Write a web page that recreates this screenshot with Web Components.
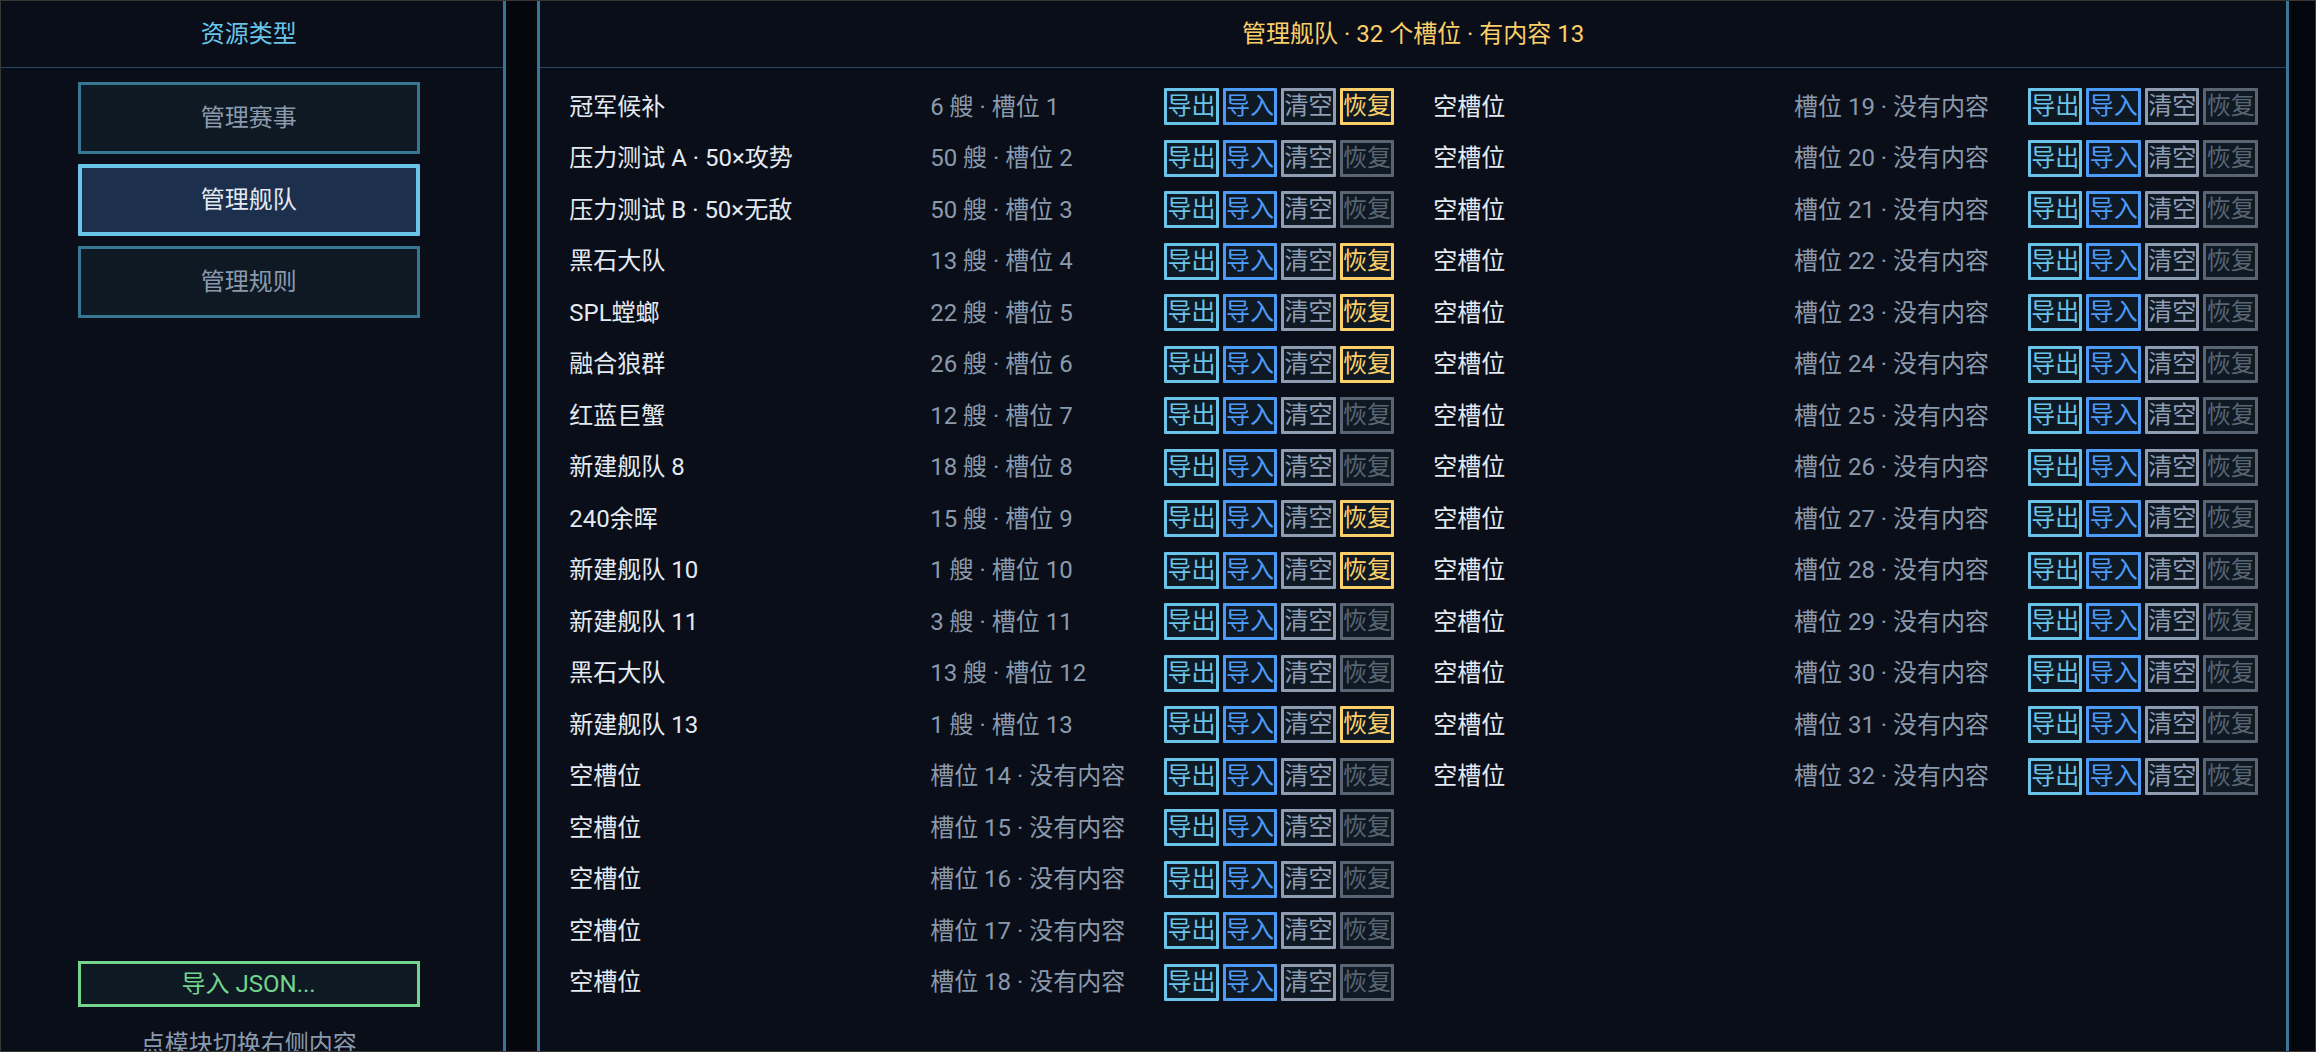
<!DOCTYPE html>
<html lang="zh-CN">
<head>
<meta charset="UTF-8">
<meta name="viewport" content="width=device-width, initial-scale=1">
<title>资源管理</title>
<style>
  :root {
    --bg: #04070e;
    --panel: #0a0e18;
    --surface: #0f1924;
    --surface-active: #1c304d;
    --frame: #383736;
    --edge: #377794;
    --divider: #264560;
    --cyan: #6ac3e8;
    --blue: #4c9bf8;
    --gray: #8e9db1;
    --gold: #fccf68;
    --green: #73d48e;
    --text: #e4eaf2;
    --muted: #8a9aad;
    --disabled: #596572;
  }

  body {
    margin: 0;
    background: var(--bg);
    color: var(--text);
    font: 24px/36px Roboto, "Noto Sans CJK SC", sans-serif;
  }
</style>
</head>
<body>
<resource-manager></resource-manager>

<script>
const SLOT_COUNT = 32;

const FLEETS = [
  { name: '冠军候补', ships: 6, backup: true },
  { name: '压力测试 A · 50×攻势', ships: 50 },
  { name: '压力测试 B · 50×无敌', ships: 50 },
  { name: '黑石大队', ships: 13, backup: true },
  { name: 'SPL螳螂', ships: 22, backup: true },
  { name: '融合狼群', ships: 26, backup: true },
  { name: '红蓝巨蟹', ships: 12 },
  { name: '新建舰队 8', ships: 18 },
  { name: '240余晖', ships: 15, backup: true },
  { name: '新建舰队 10', ships: 1, backup: true },
  { name: '新建舰队 11', ships: 3 },
  { name: '黑石大队', ships: 13 },
  { name: '新建舰队 13', ships: 1, backup: true },
];

// Bordered panel with a centered title bar
class HudPanel extends HTMLElement {
  constructor() {
    super();
    this.attachShadow({ mode: 'open' });
  }

  connectedCallback() {
    this.shadowRoot.innerHTML = `
      <style>
        :host {
          display: flex;
          flex-direction: column;
          box-sizing: border-box;
          min-width: 0;
          background: var(--panel);
          border: 0 solid var(--edge);
        }

        header {
          padding: 15px var(--inset, 0) 15px 0;
          border-bottom: 1px solid var(--divider);
          text-align: center;
        }

        h2 {
          margin: 0;
          font-size: inherit;
          font-weight: 400;
          color: var(--title-color, var(--cyan));
        }

        .body {
          flex: 1;
          display: flex;
          flex-direction: column;
          min-height: 0;
          padding-right: var(--inset, 0);
        }
      </style>
      <header><h2><slot name="title"></slot></h2></header>
      <div class="body"><slot></slot></div>
    `;
  }
}

// Large button in the sidebar
class HudButton extends HTMLElement {
  constructor() {
    super();
    this.attachShadow({ mode: 'open' });
  }

  connectedCallback() {
    this.shadowRoot.innerHTML = `
      <style>
        :host { display: block; }

        button {
          display: block;
          width: 100%;
          box-sizing: border-box;
          padding: 15px 0;
          border: 3px solid var(--edge);
          background: var(--surface);
          color: var(--muted);
          font: inherit;
          cursor: pointer;
        }

        :host([active]) button {
          padding: 14px 0;
          border: 4px solid var(--cyan);
          border-radius: 1px;
          background: var(--surface-active);
          color: var(--text);
        }

        :host([variant="import"]) button {
          padding: 2px 0;
          border-color: var(--green);
          color: var(--green);
        }
      </style>
      <button type="button"><slot></slot></button>
    `;
  }
}

// One storage slot: name, details and its four actions
class FleetSlot extends HTMLElement {
  constructor() {
    super();
    this.attachShadow({ mode: 'open' });
  }

  connectedCallback() {
    const index = this.getAttribute('index');
    const ships = this.getAttribute('ships');
    const name = this.getAttribute('name') || '空槽位';
    const meta = ships ? `${ships} 艘 · 槽位 ${index}` : `槽位 ${index} · 没有内容`;

    this.shadowRoot.innerHTML = `
      <style>
        :host {
          display: grid;
          grid-template-columns: 1fr 234px 230px;
          align-items: center;
          white-space: nowrap;
        }

        .meta { color: var(--muted); }

        .actions {
          display: grid;
          grid-template-columns: repeat(4, minmax(0, 1fr));
          gap: 4px;
        }

        button {
          display: flex;
          justify-content: center;
          box-sizing: border-box;
          height: 37px;
          padding: 0;
          border: 3px solid currentColor;
          border-radius: 1px;
          background: var(--surface);
          font: inherit;
          line-height: 31px;
          cursor: pointer;
        }

        .export { color: var(--cyan); }
        .import { color: var(--blue); }
        .clear { color: var(--gray); }
        .restore { color: var(--gold); }
        .restore:disabled { color: var(--disabled); cursor: default; }
      </style>
      <span class="name">${name}</span>
      <span class="meta">${meta}</span>
      <div class="actions">
        <button type="button" class="export">导出</button>
        <button type="button" class="import">导入</button>
        <button type="button" class="clear">清空</button>
        <button type="button" class="restore" ${this.hasAttribute('backup') ? '' : 'disabled'}>恢复</button>
      </div>
    `;
  }
}

class FleetList extends HTMLElement {
  constructor() {
    super();
    this.attachShadow({ mode: 'open' });
  }

  connectedCallback() {
    this.shadowRoot.innerHTML = `
      <style>
        :host {
          flex: 1;
          display: grid;
          grid-template: repeat(18, 1fr) / repeat(2, minmax(0, 1fr));
          grid-auto-flow: column;
          column-gap: 39px;
          padding: 13px 28px 67px 29px;
        }
      </style>
    `;

    for (let i = 0; i < SLOT_COUNT; i++) {
      const fleet = FLEETS[i];
      const row = document.createElement('fleet-slot');
      row.setAttribute('index', i + 1);
      if (fleet) {
        row.setAttribute('name', fleet.name);
        row.setAttribute('ships', fleet.ships);
        row.toggleAttribute('backup', Boolean(fleet.backup));
      }
      this.shadowRoot.appendChild(row);
    }
  }
}

class ResourceManager extends HTMLElement {
  constructor() {
    super();
    this.attachShadow({ mode: 'open' });
  }

  connectedCallback() {
    this.shadowRoot.innerHTML = `
      <style>
        :host {
          display: block;
          box-sizing: border-box;
          height: 100vh;
          border: 1px solid var(--frame);
          overflow: hidden;
        }

        /* the panels run on past the bottom edge of the window */
        .layout {
          display: grid;
          grid-template-columns: 15fr 52fr;
          column-gap: 31px;
          height: calc(100% + 24px);
          padding-right: 26px;
        }

        .types { border-right-width: 3px; --inset: 7px; }
        .slots { border-left-width: 3px; border-right-width: 3px; --title-color: var(--gold); }

        nav {
          flex: 1;
          display: flex;
          flex-direction: column;
          gap: 10px;
          padding-top: 14px;
        }

        nav, .foot {
          width: 69%;
          margin: 0 auto;
        }

        .foot { text-align: center; }

        .foot p {
          margin: 19px 0 13px;
          color: var(--muted);
          white-space: nowrap;
        }
      </style>
      <div class="layout">
        <hud-panel class="types">
          <span slot="title">资源类型</span>
          <nav>
            <hud-button>管理赛事</hud-button>
            <hud-button active>管理舰队</hud-button>
            <hud-button>管理规则</hud-button>
          </nav>
          <div class="foot">
            <hud-button variant="import">导入 JSON...</hud-button>
            <p>点模块切换右侧内容</p>
          </div>
        </hud-panel>
        <hud-panel class="slots">
          <span slot="title">管理舰队 · ${SLOT_COUNT} 个槽位 · 有内容 ${FLEETS.length}</span>
          <fleet-list></fleet-list>
        </hud-panel>
      </div>
    `;
  }
}

customElements.define('hud-panel', HudPanel);
customElements.define('hud-button', HudButton);
customElements.define('fleet-slot', FleetSlot);
customElements.define('fleet-list', FleetList);
customElements.define('resource-manager', ResourceManager);
</script>
</body>
</html>
